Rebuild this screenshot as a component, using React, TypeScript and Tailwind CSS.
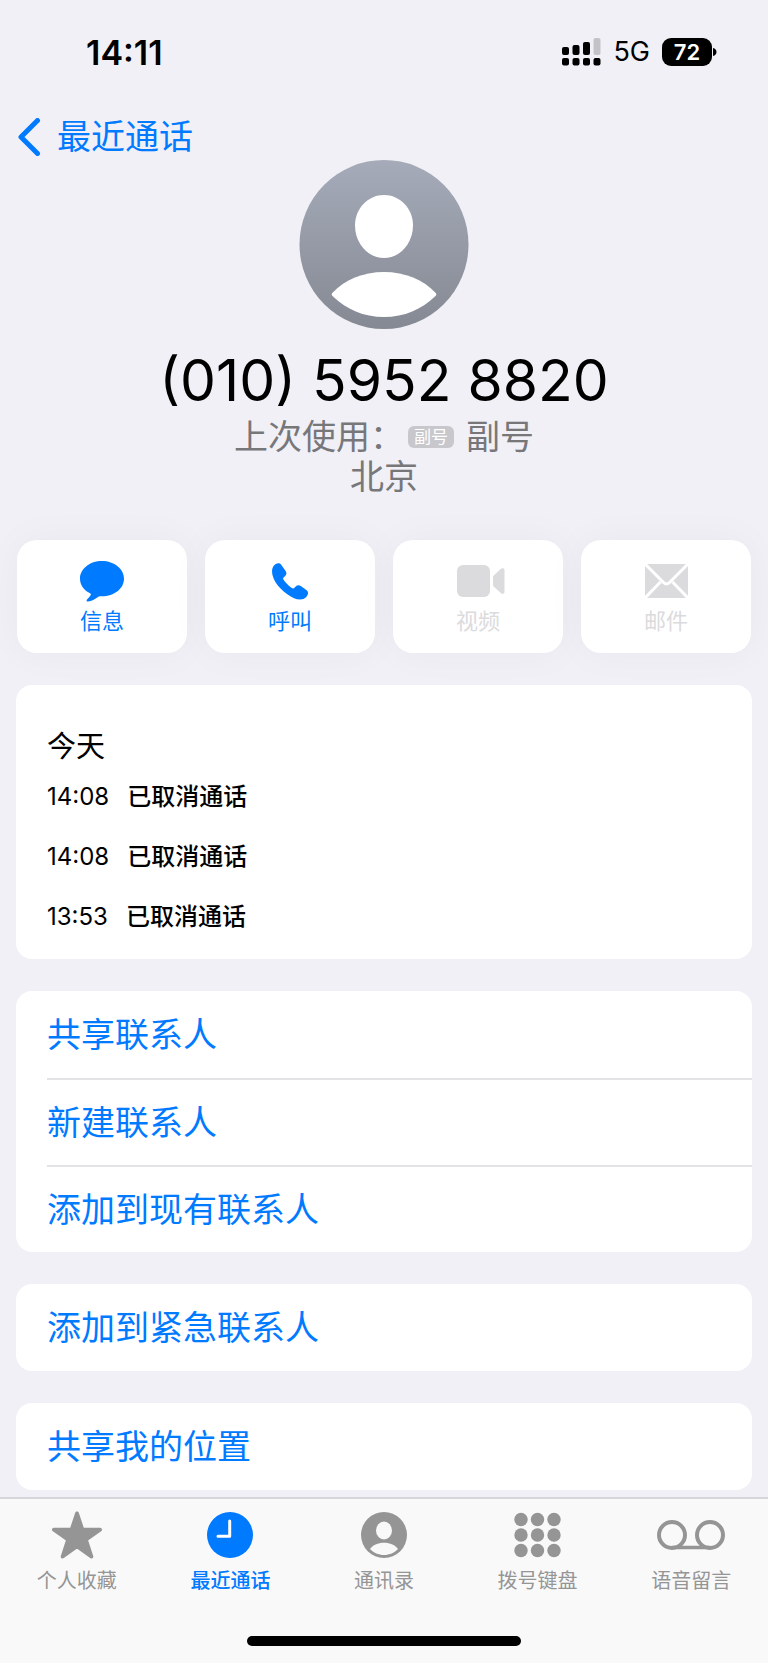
import clsx from "clsx"

const calls = [
    { id: 1, time: "14:08", status: "已取消通话" },
    { id: 2, time: "14:08", status: "已取消通话" },
    { id: 3, time: "13:53", status: "已取消通话" },
];

const groups = [
    ["共享联系人", "新建联系人", "添加到现有联系人"],
    ["添加到紧急联系人"],
    ["共享我的位置"],
];

const MessageIcon = () => (
    <svg width="44" height="41" viewBox="0 0 44 41" fill="currentColor" aria-hidden="true">
        <path d="M22 0C9.800 0 0 7.800 0 17.700c0 6.300 3.900 11.500 10 14.600.9.500 1.100 1.100.6 2-.8 1.300-2 2.500-3.400 3.900-1.100 1.200-.6 2.500.9 2.400 3.200-.3 7.200-2.500 9.900-4.600.9-.7 1.400-.8 2.400-.7H22c12.200 0 22-7.800 22-17.600S34.200 0 22 0z" />
    </svg>
)

const PhoneIcon = () => (
    <svg width="36" height="37" viewBox="0 0 36 37" fill="currentColor" aria-hidden="true">
        <path d="M2.200 2.200C4.200.1 7.400-.6 9.200 1.700l4.400 6.300c1.300 1.900 1 3.500-.5 5l-1.500 1.500c-.6.6-.6 1.200-.2 1.900 1 1.600 2.500 3.300 4 4.800s3.300 3.100 4.900 4.100c.7.4 1.300.4 1.900-.2l1.500-1.500c1.500-1.500 3.100-1.800 5-.5l5.700 4c2.300 1.700 2 4.700-.1 6.900-2.700 3-7.700 3.200-12.300 1.200-5-2.100-9.300-5.600-13.400-9.700C4.500 21.400 1.900 17.200.600 12.500-.4 8.300-.1 4.500 2.200 2.200z" />
    </svg>
)

const VideoIcon = () => (
    <svg width="53" height="32" viewBox="-5 0 53 32" fill="currentColor" aria-hidden="true">
        <rect width="33" height="32" rx="6" />
        <path d="M36 12.500c0-1 .4-1.700 1.200-2.400l6.500-6c1.400-1.300 3.800-1.100 3.800 1v22c0 2.100-2.400 2.300-3.800 1l-6.500-6c-.8-.7-1.200-1.400-1.200-2.400z" />
    </svg>
)

const MailIcon = () => (
    <svg width="43" height="34" viewBox="0 0 43 34" aria-hidden="true">
        <rect width="43" height="34" rx="3" fill="currentColor" />
        <path d="M0 0l18.500 18.500c1.800 1.800 4.200 1.800 6 0L43 0M0 34l15.500-16M43 34L27.500 18" fill="none" stroke="#fff" strokeWidth="3" />
    </svg>
)

const StarIcon = () => (
    <svg width="50" height="48" viewBox="0 0 50 48" fill="currentColor" stroke="currentColor" strokeWidth="4" strokeLinejoin="round" aria-hidden="true">
        <path d="M25 2.500l5.300 16.200H48L33.800 28.600 39.300 45.500 25 35.200 10.700 45.500 16.200 28.600 2 18.700h17.700z" />
    </svg>
)

const ClockIcon = () => (
    <svg width="46" height="46" viewBox="0 0 46 46" aria-hidden="true">
        <circle cx="23" cy="23" r="23" fill="currentColor" />
        <path d="M22.700 9v15.300H11" fill="none" stroke="#fff" strokeWidth="3" strokeLinecap="round" strokeLinejoin="round" />
    </svg>
)

const ContactIcon = () => (
    <svg width="46" height="46" viewBox="0 0 46 46" aria-hidden="true">
        <circle cx="23" cy="23" r="23" fill="currentColor" />
        <ellipse cx="23" cy="18.500" rx="8" ry="9" fill="#f9f9fa" />
        <path d="M9 37c2.500-4 8-6.300 14-6.300S34.500 33 37 37c-3.500 3.700-8.500 6-14 6s-10.500-2.300-14-6z" fill="#f9f9fa" />
    </svg>
)

const KeypadIcon = () => (
    <svg width="47" height="46" viewBox="0 0 47 46" fill="currentColor" aria-hidden="true">
        {[7.5, 23, 38.5].map((cy) =>
            [7, 23.5, 40].map((cx) => <circle key={`${cx}-${cy}`} cx={cx} cy={cy} r="6.700" />)
        )}
    </svg>
)

const VoicemailIcon = () => (
    <svg width="68" height="30" viewBox="0 0 68 30" fill="none" stroke="currentColor" strokeWidth="4" aria-hidden="true">
        <circle cx="15" cy="15" r="13" />
        <circle cx="53" cy="15" r="13" />
        <path d="M15 27.500h38" strokeWidth="3.500" />
    </svg>
)

const actions = [
    { label: "信息", icon: <MessageIcon />, disabled: false },
    { label: "呼叫", icon: <PhoneIcon />, disabled: false },
    { label: "视频", icon: <VideoIcon />, disabled: true },
    { label: "邮件", icon: <MailIcon />, disabled: true },
];

const tabs = [
    { label: "个人收藏", icon: <StarIcon /> },
    { label: "最近通话", icon: <ClockIcon />, active: true },
    { label: "通讯录", icon: <ContactIcon /> },
    { label: "拨号键盘", icon: <KeypadIcon /> },
    { label: "语音留言", icon: <VoicemailIcon /> },
];

const StatusBar = () => (
    <div className="flex h-[102px] items-center justify-between pt-[2px] pr-[51px] pl-[86px]">
        <span className="text-[34px] font-semibold">14:11</span>
        <div className="flex items-center">
            {/* dual sim signal */}
            <svg width="39" height="28" viewBox="0 0 39 28" aria-label="信号">
                <rect x="0" y="9" width="7" height="8" rx="2" />
                <rect x="10.500" y="7" width="7" height="10" rx="2" />
                <rect x="21" y="4" width="7" height="13" rx="2" />
                <rect x="31.500" y="0" width="7" height="17" rx="2" fill="#c3c3c7" />
                {[0, 10.5, 21, 31.5].map((x) => <rect key={x} x={x} y="20" width="7" height="7.500" rx="2" />)}
            </svg>
            <span className="ml-3 text-[27px]">5G</span>
            <span className="ml-3 flex h-7 w-[50px] items-center justify-center rounded-[9px] bg-black text-[22px] font-semibold text-white">72</span>
            <svg width="5" height="10" viewBox="0 0 5 10" aria-hidden="true">
                <path d="M1 1c2.200.6 3.500 2 3.500 4S3.200 8.400 1 9z" />
            </svg>
        </div>
    </div>
)

const Avatar = () => (
    <svg className="mx-auto" width="170" height="170" viewBox="0 0 170 170" aria-hidden="true">
        <defs>
            <linearGradient id="avatar" x1="0" y1="0" x2="0" y2="1">
                <stop offset="0" stopColor="#a5abb9" />
                <stop offset="1" stopColor="#858993" />
            </linearGradient>
        </defs>
        <circle cx="85" cy="85.500" r="84.500" fill="url(#avatar)" />
        <path d="M85 36c16.200 0 29 13.600 29 30.500C114 84.500 101 99 85 99S56 84.500 56 66.500C56 49.600 68.800 36 85 36z" fill="#fff" />
        <path d="M33.500 137c-1.200-1.200-1-2.200 0-3.300C45.500 121 64 113 85 113s39.500 8 51.500 20.700c1 1.100 1.200 2.100 0 3.300C122.500 150.500 105.500 158 85 158s-37.500-7.500-51.500-21z" fill="#fff" />
    </svg>
)

const App = () => {
    return (
        <div className="flex min-h-screen flex-col bg-[#f1f0f6] font-['Inter','Noto_Sans_CJK_SC',sans-serif] text-black">
            <StatusBar />

            <header className="flex h-[57px] items-start pt-[13px] pl-[17px] text-[#007aff]">
                <a href="#" className="flex items-center gap-4 text-[34px] leading-[44px]">
                    <svg width="24" height="38" viewBox="0 0 24 38" fill="none" stroke="currentColor" strokeWidth="5" strokeLinecap="round" strokeLinejoin="round" aria-hidden="true">
                        <path d="M20.500 2.500L4 19l16.500 16.500" />
                    </svg>
                    最近通话
                </a>
            </header>

            <main className="flex-1 px-4 pb-[7px]">
                <section className="text-center">
                    <Avatar />
                    <h1 className="mt-4 text-[57px] leading-[72px]">(010) 5952 8820</h1>
                    <div className="text-[34px] leading-10 text-[#77777a]">
                        <p className="flex items-center justify-center">
                            上次使用：
                            <span className="mr-3 ml-1 rounded-md bg-[#c7c7cc] px-[6px] text-[17px] leading-[22px] text-white">副号</span>
                            副号
                        </p>
                        <p>北京</p>
                    </div>
                </section>

                <div className="mt-[43px] grid grid-cols-4 gap-[18px] px-px">
                    {actions.map((item) => (
                        <button
                            key={item.label}
                            type="button"
                            disabled={item.disabled}
                            className={clsx(
                                "flex h-[113px] flex-col items-center rounded-[20px] bg-white pt-5 shadow-[0_0_40px_rgba(0,0,40,0.04)]",
                                item.disabled ? "text-[#dbdbdd]" : "text-[#007aff]"
                            )}
                        >
                            <span className="flex h-[42px] items-center">{item.icon}</span>
                            <span className="mt-1 text-[22px] leading-[30px]">{item.label}</span>
                        </button>
                    ))}
                </div>

                <section className="mt-8 rounded-2xl bg-white pt-[42px] pb-3 pl-[31px]">
                    <h2 className="text-[29px] leading-10">今天</h2>
                    <ul>
                        {calls.map((call) => (
                            <li key={call.id} className="flex h-[60px] items-center gap-[18px] text-[24px]">
                                <time>{call.time}</time>
                                <span className="font-medium">{call.status}</span>
                            </li>
                        ))}
                    </ul>
                </section>

                {groups.map((group) => (
                    <section key={group[0]} className="mt-8 rounded-2xl bg-white pl-[31px]">
                        {group.map((name, i) => (
                            <button
                                key={name}
                                type="button"
                                className={clsx(
                                    "block h-[87px] w-full text-left text-[34px] text-[#007aff]",
                                    i > 0 && "border-t-2 border-[#e3e3e5]"
                                )}
                            >
                                {name}
                            </button>
                        ))}
                    </section>
                ))}
            </main>

            <footer className="border-t-2 border-[#d6d5da] bg-[#f9f9fa]">
                <nav className="grid h-[102px] grid-cols-5 pt-3">
                    {tabs.map((tab) => (
                        <a
                            key={tab.label}
                            href="#"
                            className={clsx("flex flex-col items-center", tab.active ? "font-medium text-[#007aff]" : "text-[#959595]")}
                        >
                            <span className="flex h-12 items-center">{tab.icon}</span>
                            <span className="mt-2 text-[20px] leading-7">{tab.label}</span>
                        </a>
                    ))}
                </nav>
                <div className="mx-auto mt-[35px] mb-[17px] h-[10px] w-[274px] rounded-full bg-black" />
            </footer>
        </div>
    )
}

export default App
